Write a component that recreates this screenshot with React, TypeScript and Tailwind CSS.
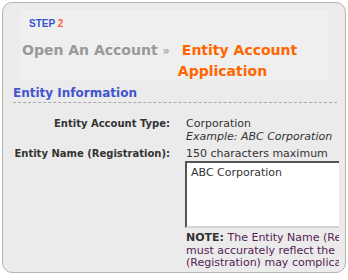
export default function App() {
  return (
    <div className="w-[348px] h-[280px] bg-white pt-[2px] pl-[2px]" style={{ fontFamily: '"DejaVu Sans", Verdana, sans-serif' }}>
      <div className="w-[344px] h-[271px] rounded-[10px] border border-[#b3b3b3] bg-[#ebebeb] overflow-hidden">
        {/* header */}
        <div className="mx-[17px] mt-[7px] h-[70px] bg-[#efefef] pl-[9px] pt-[7px]">
          <div className="text-[10px] font-bold leading-[14px] text-[#3355cc]" style={{ fontFamily: '"Liberation Sans", Arial, sans-serif' }}>
            STEP <span className="text-[#ff6633]">2</span>
          </div>
          <div className="flex mt-[9px] -ml-[7px] text-[14px] font-bold leading-[21px]">
            <div className="text-[#999999] whitespace-nowrap">
              Open An Account <span className="text-[12px] font-normal">»</span>
            </div>
            <div className="pl-[4px] text-[#ff6600]">
              <div className="pl-[8px]">Entity Account</div>
              <div className="pl-[4px]">Application</div>
            </div>
          </div>
        </div>

        {/* content */}
        <div className="mr-[6px] overflow-hidden pl-[10px]">
          <div className="pt-[5px] text-[12px] font-bold leading-[17px] text-[#4455cc]">Entity Information</div>
          <div className="border-t border-dashed border-[#aaaaaa] mr-[2px]" />
          <div className="grid grid-cols-[157px_1fr] gap-x-[16px] text-[11px] leading-[13px] text-[#333333] mt-[14px]">
            <div className="text-right text-[10px] font-bold text-[#333333] whitespace-nowrap">Entity Account Type:</div>
            <div className="whitespace-nowrap">
              <div>Corporation</div>
              <div className="italic">Example: ABC Corporation</div>
            </div>
            <div className="text-right text-[10px] font-bold text-[#333333] mt-[4px] whitespace-nowrap">Entity Name (Registration):</div>
            <div className="mt-[4px] whitespace-nowrap">
              <div>150 characters maximum</div>
              <div className="mt-[1px] w-[230px] h-[67px] -ml-[1px] bg-white border-2 border-t-[#555555] border-l-[#555555] border-b-[#d4d4d4] border-r-[#d4d4d4] px-[4px] pt-[3px] text-[#333333]">
                ABC Corporation
              </div>
              <div className="mt-[4px] leading-[12.5px] text-[#552255]">
                <div><span className="font-bold text-[#333333]">NOTE:</span> The Entity Name (Registration)</div>
                <div>must accurately reflect the legal</div>
                <div>(Registration) may complicate</div>
              </div>
            </div>
          </div>
        </div>
      </div>
    </div>
  );
}
